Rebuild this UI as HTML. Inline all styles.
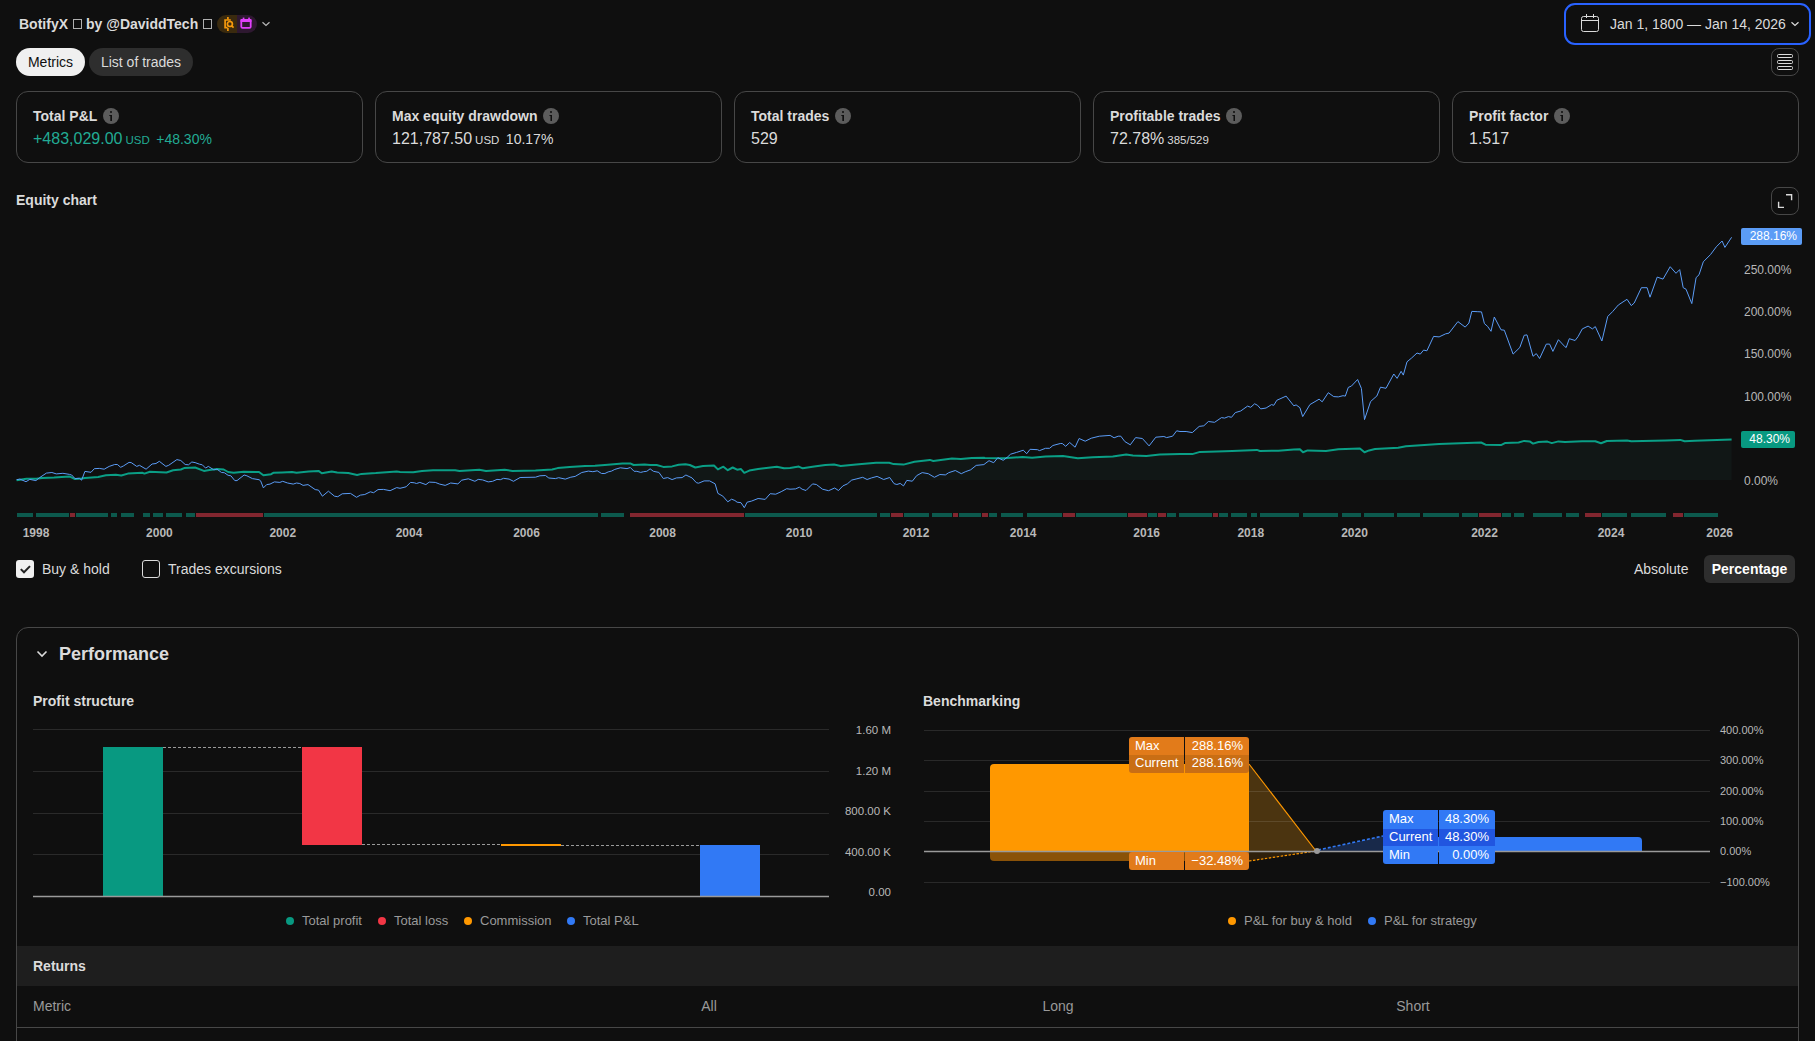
<!DOCTYPE html>
<html><head><meta charset="utf-8">
<style>
*{box-sizing:border-box;margin:0;padding:0}
html,body{width:1815px;height:1041px;overflow:hidden;background:#0f0f0f;color:#dbdbdb;font-family:"Liberation Sans",sans-serif}
.abs{position:absolute}
.b{font-weight:bold}
.title{left:19px;top:15px;font-size:14px;font-weight:bold;color:#dbdbdb;line-height:18px;white-space:nowrap}
.tofu{display:inline-block;width:9px;height:10px;border:1px solid #b0b0b0;vertical-align:0px;margin:0 4px 0 5px}
.pill{height:28px;border-radius:14px;font-size:14px;line-height:28px;text-align:center}
.card{top:91px;width:347px;height:72px;border:1px solid #474747;border-radius:12px}
.card .h{position:absolute;left:16px;top:15px;font-size:14px;font-weight:bold;line-height:18px;white-space:nowrap}
.card .v{position:absolute;left:16px;top:37px;font-size:16px;line-height:20px;white-space:nowrap}
.info{display:inline-block;width:16px;height:16px;border-radius:50%;background:#5c5c5c;vertical-align:-3px;margin-left:6px;position:relative}
.info:before{content:"";position:absolute;left:7px;top:3px;width:2px;height:2px;background:#0f0f0f;border-radius:1px}
.info:after{content:"";position:absolute;left:6px;top:7px;width:3px;height:6px;background:#0f0f0f;clip-path:polygon(0 0,100% 0,100% 100%,33.4% 100%,33.4% 16%,0 16%)}
.usd{font-size:11.5px;margin-left:3px}
.pct{font-size:14px;margin-left:6.5px}
.ylab{font-size:12px;color:#b8b8b8;line-height:14px;white-space:nowrap}
.tag{height:17px;border-radius:2px;font-size:12px;line-height:17px;color:#fff;text-align:right;padding-right:5px;white-space:nowrap}
.bl{font-size:13px;line-height:17px;color:#fff;white-space:nowrap}
.yr{font-size:12px;font-weight:bold;color:#b8b8b8;line-height:14px;white-space:nowrap;transform:translateX(-50%)}
.lg{font-size:13px;color:#9a9a9a;line-height:16px;white-space:nowrap}
.dot{display:inline-block;width:8px;height:8px;border-radius:50%;margin-right:8px;vertical-align:0px}
</style></head><body>
<!-- header -->
<div class="abs title">BotifyX<span class="tofu"></span>by @DaviddTech<span class="tofu"></span></div>
<div class="abs" style="left:217px;top:15px;width:40px;height:18px;border-radius:9px;overflow:hidden">
  <div class="abs" style="left:0;top:0;width:20px;height:18px;background:#3a2a0e"></div>
  <div class="abs" style="left:20px;top:0;width:20px;height:18px;background:#2e1830"></div>
  <svg class="abs" style="left:0;top:0" width="40" height="18" viewBox="0 0 40 18">
    <g fill="none" stroke="#f79a0c" stroke-width="1.7">
      <path d="M10.9 1.9v2.6M10.9 13v2.9"/>
      <path d="M13.8 5H8.1V12.7H10.6"/>
      <circle cx="12.9" cy="9" r="2.5"/><path d="M14.7 10.9l1.9 1.7"/>
    </g>
    <g fill="#e040fb">
      <rect x="23.4" y="3.9" width="11.2" height="3.2" rx="1"/>
      <rect x="25.7" y="2.6" width="1.7" height="2"/><rect x="31.2" y="2.6" width="1.7" height="2"/>
    </g>
    <rect x="24.3" y="4.8" width="9.4" height="8.1" rx="1.2" fill="none" stroke="#e040fb" stroke-width="1.8"/>
  </svg>
</div>
<svg class="abs" style="left:261px;top:20px" width="10" height="8" viewBox="0 0 10 8"><path d="M1.5 2.2l3.5 3.3 3.5-3.3" fill="none" stroke="#b8b8b8" stroke-width="1.2"/></svg>

<div class="abs" style="left:1564px;top:3px;width:247px;height:42px;border:2px solid #2962ff;border-radius:11px"></div>
<svg class="abs" style="left:1580px;top:13px" width="20" height="20" viewBox="0 0 20 20"><g fill="none" stroke="#dbdbdb" stroke-width="1"><rect x="1.5" y="3.5" width="17" height="15" rx="2"/><path d="M1.5 7.5h17M6.5 1v4M13.5 1v4"/></g></svg>
<div class="abs" style="left:1610px;top:15px;font-size:14px;line-height:18px;white-space:nowrap">Jan 1, 1800 — Jan 14, 2026</div>
<svg class="abs" style="left:1790px;top:20px" width="10" height="8" viewBox="0 0 10 8"><path d="M1.5 2.2l3.5 3.3 3.5-3.3" fill="none" stroke="#dbdbdb" stroke-width="1.2"/></svg>

<div class="abs pill" style="left:16px;top:48px;width:69px;background:#f0f0f0;color:#0f0f0f">Metrics</div>
<div class="abs pill" style="left:89px;top:48px;width:104px;background:#2e2e2e;color:#dbdbdb">List of trades</div>

<div class="abs" style="left:1771px;top:48px;width:28px;height:28px;border:1px solid #474747;border-radius:8px"></div>
<svg class="abs" style="left:1771px;top:48px" width="28" height="28" viewBox="0 0 28 28"><g fill="none" stroke="#dbdbdb" stroke-width="1"><rect x="6.5" y="6.5" width="15" height="3" rx="1"/><rect x="6.5" y="12.5" width="15" height="3" rx="1"/><rect x="6.5" y="18.5" width="15" height="3" rx="1"/></g></svg>

<!-- cards -->
<div class="abs card" style="left:16px"><div class="h">Total P&amp;L<span class="info"></span></div><div class="v" style="color:#22ab94">+483,029.00<span class="usd">USD</span><span class="pct">+48.30%</span></div></div>
<div class="abs card" style="left:375px"><div class="h">Max equity drawdown<span class="info"></span></div><div class="v">121,787.50<span class="usd">USD</span><span class="pct">10.17%</span></div></div>
<div class="abs card" style="left:734px"><div class="h">Total trades<span class="info"></span></div><div class="v">529</div></div>
<div class="abs card" style="left:1093px"><div class="h">Profitable trades<span class="info"></span></div><div class="v">72.78%<span class="usd">385/529</span></div></div>
<div class="abs card" style="left:1452px"><div class="h">Profit factor<span class="info"></span></div><div class="v">1.517</div></div>

<!-- equity chart -->
<div class="abs b" style="left:16px;top:191px;font-size:14px;line-height:18px">Equity chart</div>
<div class="abs" style="left:1771px;top:187px;width:28px;height:28px;border:1px solid #474747;border-radius:8px"></div>
<svg class="abs" style="left:1771px;top:187px" width="28" height="28" viewBox="0 0 28 28"><path d="M15 7.8H20.6V13.2M7.6 14.8V20.4H13" fill="none" stroke="#dbdbdb" stroke-width="1.4"/></svg>

<svg class="abs" style="left:0;top:0" width="1815" height="560" viewBox="0 0 1815 560">
<polygon points="16.6,480.2 26.5,478.8 36.4,478.8 42.0,478.0 54.1,477.5 69.5,476.4 75.0,479.1 81.6,478.6 84.9,478.0 98.2,476.9 105.9,475.3 115.8,474.7 121.3,475.5 127.9,473.6 142.2,472.8 144.4,473.6 149.9,471.7 166.5,472.5 173.1,470.3 180.8,469.5 184.1,468.1 195.1,467.5 203.9,470.9 209.4,470.0 217.1,468.9 223.7,469.5 228.1,472.0 233.7,472.8 243.6,471.7 259.0,472.0 263.4,475.3 271.1,474.2 273.3,472.8 282.1,472.5 292.1,472.0 296.5,472.8 308.6,471.4 318.5,470.9 321.8,473.3 331.7,471.4 337.2,472.5 348.3,473.1 357.1,475.0 361.5,473.9 375.8,473.1 396.7,471.4 400.0,472.0 413.2,472.2 422.0,470.9 433.1,470.3 455.1,470.3 459.5,470.9 479.3,469.8 486.0,470.9 504.7,469.8 512.4,470.9 535.5,470.6 552.1,469.5 557.6,468.1 569.7,467.0 585.1,465.9 595.0,465.8 604.9,465.0 622.5,463.6 630.3,463.4 633.6,465.0 644.6,464.5 650.1,465.0 656.7,465.0 663.3,466.9 672.1,466.4 678.7,464.7 685.4,464.2 689.8,465.0 695.3,467.5 703.0,466.1 714.0,465.5 717.9,469.4 723.4,466.7 727.8,470.2 732.7,467.5 737.1,469.7 741.0,469.1 744.3,472.8 749.3,470.6 758.1,469.1 776.8,466.7 784.0,468.3 790.0,467.9 798.8,466.6 802.7,468.3 814.2,466.5 825.3,465.0 834.1,464.6 840.7,466.1 856.1,464.4 876.0,462.8 889.2,462.8 893.6,464.1 903.5,464.6 914.5,461.7 929.9,459.9 933.3,461.0 952.0,458.6 960.8,459.1 971.8,458.0 983.9,457.8 985.0,458.0 1003.8,458.3 1022.7,456.9 1032.1,457.7 1045.5,456.4 1063.0,456.0 1077.8,458.3 1092.6,457.3 1112.8,456.4 1126.2,454.6 1132.9,455.6 1146.4,456.0 1159.8,454.6 1180.0,454.1 1192.3,454.1 1200.0,451.9 1216.9,451.5 1232.3,451.0 1256.9,449.9 1259.9,451.0 1278.4,450.7 1293.8,449.5 1299.9,449.2 1303.0,452.2 1307.6,450.4 1326.0,451.0 1338.3,449.2 1359.9,448.4 1364.5,452.2 1369.1,450.4 1375.0,449.1 1398.2,447.8 1405.9,446.2 1439.1,444.0 1481.1,442.5 1485.5,444.7 1501.0,445.1 1505.4,442.9 1518.6,442.5 1524.2,440.9 1529.7,441.4 1533.0,443.6 1538.5,442.0 1547.4,441.6 1551.8,443.1 1558.4,441.4 1565.0,441.9 1582.3,441.3 1595.3,441.3 1601.0,443.3 1606.8,441.0 1627.0,440.5 1631.3,441.3 1665.9,440.5 1680.3,439.9 1684.6,441.3 1694.7,440.7 1731.6,439.6 1731.6,480.0 16.6,480.0" fill="#111716"/>
<rect x="17" y="513" width="16" height="4" fill="#0c594d"/>
<rect x="36" y="513" width="33" height="4" fill="#0c594d"/>
<rect x="70" y="513" width="5" height="4" fill="#82262f"/>
<rect x="76" y="513" width="32" height="4" fill="#0c594d"/>
<rect x="111" y="513" width="6" height="4" fill="#0c594d"/>
<rect x="121" y="513" width="13" height="4" fill="#0c594d"/>
<rect x="143" y="513" width="7" height="4" fill="#0c594d"/>
<rect x="153" y="513" width="10" height="4" fill="#0c594d"/>
<rect x="166" y="513" width="16" height="4" fill="#0c594d"/>
<rect x="186" y="513" width="9" height="4" fill="#0c594d"/>
<rect x="196" y="513" width="67" height="4" fill="#82262f"/>
<rect x="264" y="513" width="334" height="4" fill="#0c594d"/>
<rect x="601" y="513" width="23" height="4" fill="#0c594d"/>
<rect x="630" y="513" width="114" height="4" fill="#82262f"/>
<rect x="745" y="513" width="132" height="4" fill="#0c594d"/>
<rect x="880" y="513" width="10" height="4" fill="#0c594d"/>
<rect x="891" y="513" width="12" height="4" fill="#82262f"/>
<rect x="904" y="513" width="25" height="4" fill="#0c594d"/>
<rect x="932" y="513" width="20" height="4" fill="#0c594d"/>
<rect x="953" y="513" width="5" height="4" fill="#82262f"/>
<rect x="959" y="513" width="22" height="4" fill="#0c594d"/>
<rect x="982" y="513" width="6" height="4" fill="#82262f"/>
<rect x="989" y="513" width="8" height="4" fill="#0c594d"/>
<rect x="1001" y="513" width="22" height="4" fill="#0c594d"/>
<rect x="1027" y="513" width="35" height="4" fill="#0c594d"/>
<rect x="1063" y="513" width="12" height="4" fill="#82262f"/>
<rect x="1076" y="513" width="51" height="4" fill="#0c594d"/>
<rect x="1128" y="513" width="19" height="4" fill="#82262f"/>
<rect x="1148" y="513" width="9" height="4" fill="#0c594d"/>
<rect x="1158" y="513" width="8" height="4" fill="#82262f"/>
<rect x="1167" y="513" width="9" height="4" fill="#0c594d"/>
<rect x="1179" y="513" width="33" height="4" fill="#0c594d"/>
<rect x="1213" y="513" width="5" height="4" fill="#82262f"/>
<rect x="1219" y="513" width="9" height="4" fill="#0c594d"/>
<rect x="1231" y="513" width="16" height="4" fill="#0c594d"/>
<rect x="1251" y="513" width="6" height="4" fill="#0c594d"/>
<rect x="1260" y="513" width="39" height="4" fill="#0c594d"/>
<rect x="1303" y="513" width="35" height="4" fill="#0c594d"/>
<rect x="1342" y="513" width="19" height="4" fill="#0c594d"/>
<rect x="1364" y="513" width="30" height="4" fill="#0c594d"/>
<rect x="1397" y="513" width="23" height="4" fill="#0c594d"/>
<rect x="1423" y="513" width="36" height="4" fill="#0c594d"/>
<rect x="1462" y="513" width="16" height="4" fill="#0c594d"/>
<rect x="1479" y="513" width="22" height="4" fill="#82262f"/>
<rect x="1502" y="513" width="9" height="4" fill="#0c594d"/>
<rect x="1514" y="513" width="10" height="4" fill="#0c594d"/>
<rect x="1533" y="513" width="29" height="4" fill="#0c594d"/>
<rect x="1566" y="513" width="13" height="4" fill="#0c594d"/>
<rect x="1585" y="513" width="16" height="4" fill="#82262f"/>
<rect x="1602" y="513" width="25" height="4" fill="#0c594d"/>
<rect x="1631" y="513" width="35" height="4" fill="#0c594d"/>
<rect x="1673" y="513" width="10" height="4" fill="#82262f"/>
<rect x="1684" y="513" width="34" height="4" fill="#0c594d"/>
<polyline points="16.6,480.2 26.5,478.8 36.4,478.8 42.0,478.0 54.1,477.5 69.5,476.4 75.0,479.1 81.6,478.6 84.9,478.0 98.2,476.9 105.9,475.3 115.8,474.7 121.3,475.5 127.9,473.6 142.2,472.8 144.4,473.6 149.9,471.7 166.5,472.5 173.1,470.3 180.8,469.5 184.1,468.1 195.1,467.5 203.9,470.9 209.4,470.0 217.1,468.9 223.7,469.5 228.1,472.0 233.7,472.8 243.6,471.7 259.0,472.0 263.4,475.3 271.1,474.2 273.3,472.8 282.1,472.5 292.1,472.0 296.5,472.8 308.6,471.4 318.5,470.9 321.8,473.3 331.7,471.4 337.2,472.5 348.3,473.1 357.1,475.0 361.5,473.9 375.8,473.1 396.7,471.4 400.0,472.0 413.2,472.2 422.0,470.9 433.1,470.3 455.1,470.3 459.5,470.9 479.3,469.8 486.0,470.9 504.7,469.8 512.4,470.9 535.5,470.6 552.1,469.5 557.6,468.1 569.7,467.0 585.1,465.9 595.0,465.8 604.9,465.0 622.5,463.6 630.3,463.4 633.6,465.0 644.6,464.5 650.1,465.0 656.7,465.0 663.3,466.9 672.1,466.4 678.7,464.7 685.4,464.2 689.8,465.0 695.3,467.5 703.0,466.1 714.0,465.5 717.9,469.4 723.4,466.7 727.8,470.2 732.7,467.5 737.1,469.7 741.0,469.1 744.3,472.8 749.3,470.6 758.1,469.1 776.8,466.7 784.0,468.3 790.0,467.9 798.8,466.6 802.7,468.3 814.2,466.5 825.3,465.0 834.1,464.6 840.7,466.1 856.1,464.4 876.0,462.8 889.2,462.8 893.6,464.1 903.5,464.6 914.5,461.7 929.9,459.9 933.3,461.0 952.0,458.6 960.8,459.1 971.8,458.0 983.9,457.8 985.0,458.0 1003.8,458.3 1022.7,456.9 1032.1,457.7 1045.5,456.4 1063.0,456.0 1077.8,458.3 1092.6,457.3 1112.8,456.4 1126.2,454.6 1132.9,455.6 1146.4,456.0 1159.8,454.6 1180.0,454.1 1192.3,454.1 1200.0,451.9 1216.9,451.5 1232.3,451.0 1256.9,449.9 1259.9,451.0 1278.4,450.7 1293.8,449.5 1299.9,449.2 1303.0,452.2 1307.6,450.4 1326.0,451.0 1338.3,449.2 1359.9,448.4 1364.5,452.2 1369.1,450.4 1375.0,449.1 1398.2,447.8 1405.9,446.2 1439.1,444.0 1481.1,442.5 1485.5,444.7 1501.0,445.1 1505.4,442.9 1518.6,442.5 1524.2,440.9 1529.7,441.4 1533.0,443.6 1538.5,442.0 1547.4,441.6 1551.8,443.1 1558.4,441.4 1565.0,441.9 1582.3,441.3 1595.3,441.3 1601.0,443.3 1606.8,441.0 1627.0,440.5 1631.3,441.3 1665.9,440.5 1680.3,439.9 1684.6,441.3 1694.7,440.7 1731.6,439.6" fill="none" stroke="#0a9f86" stroke-width="2" stroke-linejoin="round"/>
<polyline points="16.6,479.7 19.9,479.1 26.0,481.7 29.8,479.4 35.9,480.6 39.8,477.5 46.4,473.1 51.9,472.5 56.3,473.9 62.9,473.3 69.5,474.4 71.7,475.0 75.0,478.6 79.4,478.3 81.6,480.2 84.9,471.4 91.0,472.3 94.3,468.7 99.3,468.4 104.2,469.2 109.2,466.4 114.7,464.5 117.4,464.5 120.7,467.3 123.5,465.9 129.0,462.4 131.2,462.6 136.7,466.4 139.5,465.3 146.1,469.2 152.1,464.0 156.0,463.5 159.3,461.3 165.9,466.4 168.7,465.3 176.9,459.6 180.8,460.5 185.2,464.5 188.5,464.8 191.8,462.0 195.1,462.6 199.5,464.2 202.3,464.8 205.6,468.1 208.3,466.4 213.8,469.8 217.1,469.2 221.5,472.5 224.3,472.7 228.1,475.3 230.9,475.8 234.8,480.6 237.0,480.6 244.1,475.0 246.9,475.8 252.4,478.6 259.0,479.7 260.6,480.8 263.4,487.9 266.7,484.6 270.0,484.1 274.4,481.9 279.9,482.4 282.7,481.3 287.6,483.0 293.2,484.1 296.5,483.0 299.8,483.5 303.1,485.4 308.0,484.6 315.2,489.6 318.5,490.1 322.4,496.2 328.4,491.2 334.5,496.2 337.8,496.7 342.2,493.8 350.5,493.4 356.5,497.3 360.4,495.1 364.8,494.5 370.3,491.8 373.6,492.7 378.0,489.6 383.5,489.4 390.1,490.7 396.7,487.6 400.0,488.3 406.1,486.8 410.5,482.4 414.3,482.8 416.5,483.5 419.8,482.4 425.9,484.6 429.2,482.1 435.3,482.4 439.7,484.1 445.2,485.4 450.7,483.0 457.9,483.9 461.7,480.2 468.3,478.8 474.9,481.3 478.2,479.4 482.6,479.9 488.2,481.9 492.6,481.3 497.0,479.4 500.3,479.7 503.6,478.3 509.1,479.1 513.5,481.3 520.1,477.5 535.5,477.2 539.9,475.8 545.5,475.5 548.8,478.0 555.4,478.6 558.7,477.7 565.3,479.1 570.8,477.2 575.2,476.4 581.8,472.5 588.4,471.1 592.8,471.7 595.0,471.3 597.2,470.8 601.6,473.5 604.9,473.5 608.2,471.9 611.5,471.1 614.8,469.4 620.3,467.8 627.0,468.6 630.3,467.5 634.1,471.3 636.9,471.3 640.7,472.4 643.5,471.7 646.8,471.3 650.1,468.8 653.4,471.3 658.9,472.4 663.3,478.5 667.7,477.6 672.1,479.6 676.5,477.9 682.1,477.6 685.9,475.0 692.0,477.9 696.4,482.7 698.6,483.2 704.1,480.9 709.6,480.9 715.1,483.8 717.9,493.4 722.8,496.1 727.8,501.8 731.6,499.2 734.9,500.5 737.1,502.2 741.0,502.7 744.3,507.7 747.1,502.2 751.5,501.1 758.1,498.5 765.2,499.4 770.2,493.7 775.7,494.2 781.2,491.7 786.7,488.7 790.0,489.2 795.5,488.9 799.4,487.2 802.1,489.2 806.0,490.5 812.6,483.9 816.4,484.5 822.5,489.2 828.6,490.7 834.6,488.0 838.5,490.5 842.9,485.9 847.3,483.9 851.7,480.1 856.1,479.0 862.7,477.3 867.1,479.5 871.5,477.9 877.1,476.4 883.7,479.5 889.7,477.5 894.1,483.7 896.9,484.5 900.2,483.4 903.5,485.9 906.8,480.4 912.3,481.2 916.7,475.6 922.2,472.6 928.3,473.7 934.4,477.3 939.9,474.5 945.4,474.9 948.7,472.7 955.3,470.5 961.3,473.7 965.2,471.8 970.7,469.8 976.2,465.4 983.9,464.6 985.0,463.7 989.0,460.7 993.7,462.7 997.8,457.7 1003.2,460.3 1007.2,457.3 1010.6,454.2 1016.6,452.4 1023.3,450.2 1026.7,453.7 1030.1,449.3 1037.5,449.7 1039.5,450.6 1045.5,448.3 1049.6,448.3 1052.9,445.5 1060.3,443.5 1062.3,443.5 1065.7,446.3 1069.7,442.5 1075.1,447.2 1079.1,438.5 1085.2,441.2 1091.3,438.2 1099.3,436.2 1110.1,435.4 1114.1,437.8 1118.2,436.2 1120.8,436.2 1124.9,441.6 1130.3,444.8 1135.6,437.6 1142.4,438.5 1149.1,445.9 1155.8,437.2 1163.9,436.5 1166.6,437.6 1172.6,436.2 1176.7,430.8 1180.0,431.5 1186.1,431.5 1192.3,432.6 1199.2,426.4 1203.8,425.8 1208.4,421.5 1214.6,422.3 1221.5,417.6 1224.6,418.1 1228.4,416.6 1231.5,417.3 1235.3,412.6 1240.7,411.0 1247.6,406.1 1250.7,407.3 1254.6,403.8 1257.6,405.3 1260.7,408.9 1266.1,408.0 1271.5,404.6 1273.8,405.3 1276.8,400.3 1286.1,396.1 1293.8,405.8 1296.1,404.9 1299.9,407.7 1302.7,416.6 1309.9,404.6 1319.1,399.2 1322.2,401.8 1328.3,392.7 1333.7,396.6 1338.3,396.9 1343.0,395.7 1345.3,396.1 1348.3,387.4 1351.4,386.1 1357.6,379.5 1361.4,388.4 1364.5,419.6 1370.6,401.5 1375.0,397.6 1376.8,396.1 1380.5,387.2 1386.0,388.3 1393.8,374.0 1397.1,378.4 1401.1,371.3 1403.3,375.1 1407.0,361.8 1411.5,358.1 1417.0,353.0 1420.3,354.1 1423.6,350.1 1426.9,350.8 1433.6,336.4 1439.1,336.9 1445.7,333.8 1449.0,333.1 1457.9,321.6 1465.2,327.1 1468.9,323.1 1471.8,311.4 1477.8,311.7 1481.5,311.9 1484.4,323.6 1487.7,326.5 1491.0,331.3 1494.3,317.0 1501.0,329.8 1504.3,330.2 1513.1,354.1 1519.8,347.5 1524.2,335.3 1527.0,334.9 1533.0,356.3 1536.3,353.6 1539.6,358.5 1546.3,344.1 1549.6,344.1 1552.9,351.4 1558.4,339.7 1565.0,346.8 1566.2,347.5 1569.3,338.7 1575.1,340.5 1578.0,336.7 1582.3,328.9 1588.1,326.1 1592.4,328.9 1595.3,326.6 1601.9,341.0 1607.7,316.5 1612.6,311.6 1618.3,305.0 1627.0,299.3 1631.3,305.6 1634.2,303.0 1641.4,287.7 1647.1,287.7 1650.0,297.2 1657.2,277.1 1663.0,279.1 1670.2,266.7 1676.0,273.3 1679.7,269.6 1683.2,287.7 1686.0,289.2 1691.8,303.6 1696.1,277.6 1699.0,274.8 1703.3,261.8 1710.5,254.6 1716.3,246.8 1722.1,241.0 1724.9,247.4 1731.6,237.3" fill="none" stroke="#5b9cf6" stroke-width="1" stroke-linejoin="round"/>
</svg>
<div class="abs ylab" style="left:1744px;top:262.7px">250.00%</div>
<div class="abs ylab" style="left:1744px;top:304.8px">200.00%</div>
<div class="abs ylab" style="left:1744px;top:346.6px">150.00%</div>
<div class="abs ylab" style="left:1744px;top:389.5px">100.00%</div>
<div class="abs ylab" style="left:1744px;top:473.5px">0.00%</div>
<div class="abs tag" style="left:1741px;top:228px;width:61px;background:#5b9cf6">288.16%</div>
<div class="abs tag" style="left:1741px;top:431px;width:54px;background:#089981">48.30%</div>
<div class="abs yr" style="left:36px;top:526px">1998</div>
<div class="abs yr" style="left:159.4px;top:526px">2000</div>
<div class="abs yr" style="left:282.8px;top:526px">2002</div>
<div class="abs yr" style="left:409px;top:526px">2004</div>
<div class="abs yr" style="left:526.5px;top:526px">2006</div>
<div class="abs yr" style="left:662.6px;top:526px">2008</div>
<div class="abs yr" style="left:799.2px;top:526px">2010</div>
<div class="abs yr" style="left:916px;top:526px">2012</div>
<div class="abs yr" style="left:1023.2px;top:526px">2014</div>
<div class="abs yr" style="left:1146.7px;top:526px">2016</div>
<div class="abs yr" style="left:1250.8px;top:526px">2018</div>
<div class="abs yr" style="left:1354.5px;top:526px">2020</div>
<div class="abs yr" style="left:1484.5px;top:526px">2022</div>
<div class="abs yr" style="left:1611px;top:526px">2024</div>
<div class="abs yr" style="left:1719.7px;top:526px">2026</div>

<!-- checkboxes -->
<div class="abs" style="left:16px;top:560px;width:18px;height:18px;border-radius:3px;background:#f0f0f0"></div>
<svg class="abs" style="left:16px;top:560px" width="18" height="18" viewBox="0 0 18 18"><path d="M4.8 9.1L8 12.3L14 6.1" fill="none" stroke="#222" stroke-width="2"/></svg>
<div class="abs" style="left:42px;top:560px;font-size:14px;line-height:18px">Buy &amp; hold</div>
<div class="abs" style="left:142px;top:560px;width:18px;height:18px;border-radius:3px;border:1px solid #dbdbdb"></div>
<div class="abs" style="left:168px;top:560px;font-size:14px;line-height:18px">Trades excursions</div>

<div class="abs" style="left:1634px;top:560px;font-size:14px;line-height:18px">Absolute</div>
<div class="abs pill" style="left:1704px;top:555px;width:91px;height:28px;border-radius:6px;background:#2e2e2e;font-weight:bold;line-height:29px;color:#fff">Percentage</div>

<!-- performance -->
<div class="abs" style="left:16px;top:627px;width:1783px;height:500px;border:1px solid #474747;border-radius:12px"></div>
<svg class="abs" style="left:35px;top:648px" width="14" height="12" viewBox="0 0 14 12"><path d="M2.5 3.5l4.5 4.5 4.5-4.5" fill="none" stroke="#dbdbdb" stroke-width="1.6"/></svg>
<div class="abs b" style="left:59px;top:643px;font-size:18px;line-height:22px">Performance</div>

<div class="abs b" style="left:33px;top:692px;font-size:14px;line-height:18px">Profit structure</div>
<div class="abs b" style="left:923px;top:692px;font-size:14px;line-height:18px">Benchmarking</div>

<svg class="abs" style="left:0;top:700px" width="1815" height="250" viewBox="0 700 1815 250">
<g stroke="#2a2a2a" stroke-width="1">
<path d="M33 729.5H829M33 771.5H829M33 813.5H829M33 854.5H829"/>
</g>
<rect x="103" y="747" width="60" height="149" fill="#089981"/>
<rect x="302" y="747" width="60" height="98" fill="#f23645"/>
<rect x="501" y="844" width="60" height="2" fill="#ff9800"/>
<rect x="700" y="845" width="60" height="51" fill="#3179f5"/>
<g stroke="#9a9a9a" stroke-width="1" stroke-dasharray="3 2">
<path d="M163 747.5H302M362 844.5H501M561 845.5H700"/>
</g>
<path d="M33 896.5H829" stroke="#9a9a9a" stroke-width="1.5"/>
</svg>
<div class="abs ylab" style="left:791px;top:722px;width:100px;text-align:right;font-size:11.5px;line-height:16px">1.60 M</div>
<div class="abs ylab" style="left:791px;top:763px;width:100px;text-align:right;font-size:11.5px;line-height:16px">1.20 M</div>
<div class="abs ylab" style="left:791px;top:803px;width:100px;text-align:right;font-size:11.5px;line-height:16px">800.00 K</div>
<div class="abs ylab" style="left:791px;top:844px;width:100px;text-align:right;font-size:11.5px;line-height:16px">400.00 K</div>
<div class="abs ylab" style="left:791px;top:884px;width:100px;text-align:right;font-size:11.5px;line-height:16px">0.00</div>
<div class="abs lg" style="left:286px;top:913px"><span class="dot" style="background:#089981"></span>Total profit</div>
<div class="abs lg" style="left:378px;top:913px"><span class="dot" style="background:#f23645"></span>Total loss</div>
<div class="abs lg" style="left:464px;top:913px"><span class="dot" style="background:#ff9800"></span>Commission</div>
<div class="abs lg" style="left:567px;top:913px"><span class="dot" style="background:#3179f5"></span>Total P&amp;L</div>

<svg class="abs" style="left:900px;top:720px" width="915" height="170" viewBox="900 720 915 170">
<polygon points="1249,764 1316,851 1249,851" fill="#4b3410"/>
<polygon points="1249,851 1316,851 1249,861" fill="#2e200c"/>
<polygon points="1316,851 1383,836 1383,851" fill="#18294a"/>
<g stroke="rgba(255,255,255,0.11)" stroke-width="1">
<path d="M924 730.5H1710M924 760.5H1710M924 791.5H1710M924 821.5H1710M924 882.5H1710"/>
</g>
<path d="M990 851V768a4 4 0 0 1 4-4H1249V851Z" fill="#ff9800"/>
<path d="M990 851V857a4 4 0 0 0 4 4H1249V851Z" fill="#8a5208"/>
<path d="M1383 851V837H1638a4 4 0 0 1 4 4V851Z" fill="#3179f5"/>
<path d="M1249 764L1316 851" stroke="#ff9800" stroke-width="1.2"/>
<path d="M1249 861L1316 851" stroke="#ff9800" stroke-width="1.2" stroke-dasharray="2.5 1.5"/>
<path d="M1318 850L1383 836" stroke="#3179f5" stroke-width="1.6" stroke-dasharray="3 2"/>
<path d="M924 851.5H1710" stroke="#9a9a9a" stroke-width="1.5"/>
<circle cx="1317" cy="851" r="3" fill="#9a9a9a"/>
</svg>
<div class="abs bl" style="left:1129px;top:737px;width:55px;height:17.5px;background:#e27b1a;padding-left:6px;border-top-left-radius:3px">Max</div>
<div class="abs bl" style="left:1185px;top:737px;width:64px;height:17.5px;background:#e27b1a;padding-right:6px;text-align:right;border-top-right-radius:3px">288.16%</div>
<div class="abs bl" style="left:1129px;top:754.5px;width:55px;height:18px;line-height:15.5px;background:#c96e14;padding-left:6px;border-bottom-left-radius:3px">Current</div>
<div class="abs bl" style="left:1185px;top:754.5px;width:64px;height:18px;line-height:15.5px;background:#c96e14;padding-right:6px;text-align:right;border-bottom-right-radius:3px">288.16%</div>
<div class="abs bl" style="left:1129px;top:852px;width:55px;height:18px;background:#e27b1a;padding-left:6px;border-radius:3px 0 0 3px">Min</div>
<div class="abs bl" style="left:1185px;top:852px;width:64px;height:18px;background:#e27b1a;padding-right:6px;text-align:right;border-radius:0 3px 3px 0">−32.48%</div>
<div class="abs bl" style="left:1383px;top:810px;width:55px;height:18.5px;background:#3179f5;padding-left:6px;border-top-left-radius:3px">Max</div>
<div class="abs bl" style="left:1439px;top:810px;width:56px;height:18.5px;background:#3179f5;padding-right:6px;text-align:right;border-top-right-radius:3px">48.30%</div>
<div class="abs bl" style="left:1383px;top:828.5px;width:55px;height:17.5px;line-height:15px;background:#2156e0;padding-left:6px;">Current</div>
<div class="abs bl" style="left:1439px;top:828.5px;width:56px;height:17.5px;line-height:15px;background:#2156e0;padding-right:6px;text-align:right;">48.30%</div>
<div class="abs bl" style="left:1383px;top:846px;width:55px;height:18px;background:#3179f5;padding-left:6px;border-bottom-left-radius:3px">Min</div>
<div class="abs bl" style="left:1439px;top:846px;width:56px;height:18px;background:#3179f5;padding-right:6px;text-align:right;border-bottom-right-radius:3px">0.00%</div>
<div class="abs ylab" style="left:1720px;top:722.2px;font-size:11px;line-height:16px">400.00%</div>
<div class="abs ylab" style="left:1720px;top:752.2px;font-size:11px;line-height:16px">300.00%</div>
<div class="abs ylab" style="left:1720px;top:783.3px;font-size:11px;line-height:16px">200.00%</div>
<div class="abs ylab" style="left:1720px;top:813.3px;font-size:11px;line-height:16px">100.00%</div>
<div class="abs ylab" style="left:1720px;top:843.4px;font-size:11px;line-height:16px">0.00%</div>
<div class="abs ylab" style="left:1720px;top:874.4px;font-size:11px;line-height:16px">−100.00%</div>
<div class="abs lg" style="left:1228px;top:913px"><span class="dot" style="background:#ff9800"></span>P&amp;L for buy &amp; hold</div>
<div class="abs lg" style="left:1368px;top:913px"><span class="dot" style="background:#3179f5"></span>P&amp;L for strategy</div>

<div class="abs" style="left:17px;top:946px;width:1781px;height:40px;background:#1e1e1e"></div>
<div class="abs b" style="left:33px;top:957px;font-size:14px;line-height:18px">Returns</div>
<div class="abs" style="left:33px;top:997px;font-size:14px;line-height:18px;color:#9a9a9a">Metric</div>
<div class="abs" style="left:709px;top:997px;font-size:14px;line-height:18px;color:#9a9a9a;transform:translateX(-50%)">All</div>
<div class="abs" style="left:1058px;top:997px;font-size:14px;line-height:18px;color:#9a9a9a;transform:translateX(-50%)">Long</div>
<div class="abs" style="left:1413px;top:997px;font-size:14px;line-height:18px;color:#9a9a9a;transform:translateX(-50%)">Short</div>
<div class="abs" style="left:17px;top:1027px;width:1781px;height:1px;background:#474747"></div>
</body></html>
